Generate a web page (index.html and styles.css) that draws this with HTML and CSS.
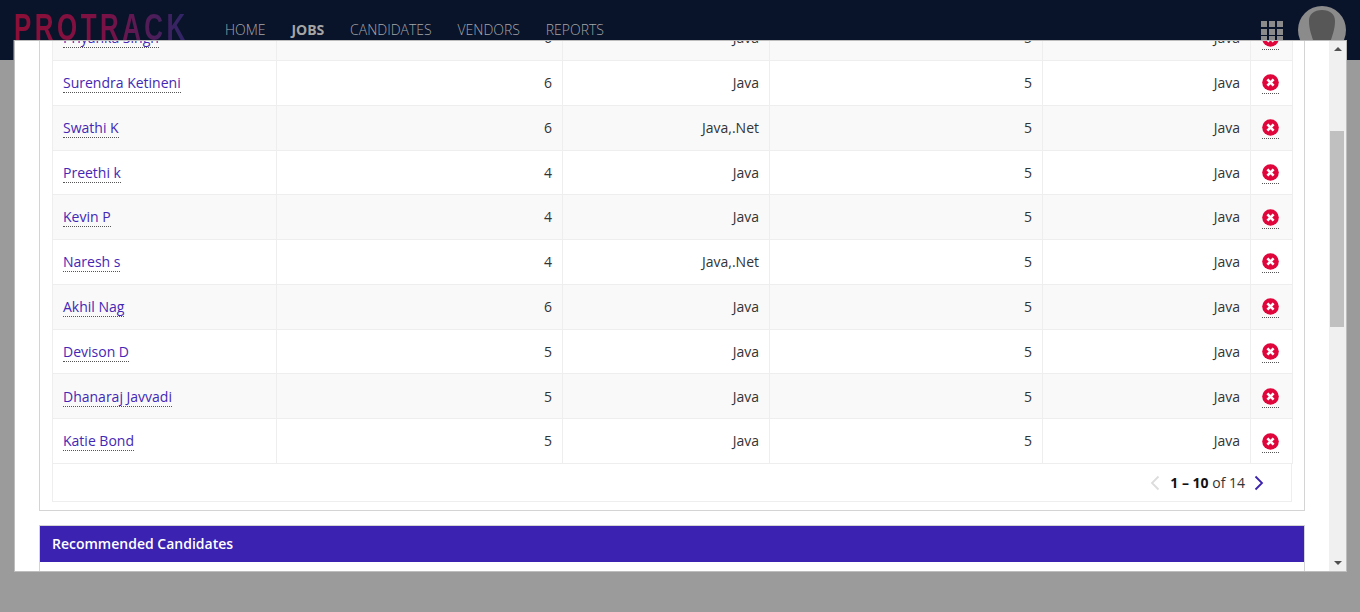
FILE: index.html
```html
<!DOCTYPE html>
<html lang="en">
<head>
    <meta charset="UTF-8">
    <meta name="viewport" content="width=device-width, initial-scale=1.0">
    <title>ProTrack Jobs</title>
    <link rel="stylesheet" href="styles.css">
</head>
<body>
    <header class="topbar">
        <div class="logo"><span>PROTRACK</span></div>
        <nav class="mainnav">
            <a href="#">HOME</a>
            <a href="#" class="active">JOBS</a>
            <a href="#">CANDIDATES</a>
            <a href="#">VENDORS</a>
            <a href="#">REPORTS</a>
        </nav>
        <div class="apps">
            <i></i><i></i><i></i><i></i><i></i><i></i><i></i><i></i><i></i>
        </div>
        <svg class="avatar" width="48" height="48" viewBox="0 0 48 48">
            <circle cx="24" cy="24" r="24" fill="#8b8b8b"/>
            <path d="M24 4c-8 0-13 4-13 11 0 9 3 15 5 22 1 5 3 9 8 9s7-4 8-9c2-7 5-13 5-22 0-7-5-11-13-11z" fill="#575757"/>
        </svg>
    </header>

    <div class="modal">
        <div class="modal-body">
            <section class="panel">
                <table class="grid">
                    <colgroup>
                        <col class="col-name">
                        <col class="col-exp">
                        <col class="col-skill">
                        <col class="col-exp2">
                        <col class="col-skill2">
                        <col class="col-del">
                    </colgroup>
                    <tbody>
                        <tr>
                            <td><a href="#" class="name">Priyanka Singh</a></td>
                            <td>6</td><td>Java</td><td>5</td><td>Java</td>
                            <td class="del"><a href="#"><svg width="17" height="17" viewBox="0 0 17 17"><circle cx="8.5" cy="8.5" r="8.3" fill="#e0063c"/><path d="M5.4 5.4l6.2 6.2M11.6 5.4l-6.2 6.2" stroke="#fff" stroke-width="2.6"/></svg></a></td>
                        </tr>
                        <tr>
                            <td><a href="#" class="name">Surendra Ketineni</a></td>
                            <td>6</td><td>Java</td><td>5</td><td>Java</td>
                            <td class="del"><a href="#"><svg width="17" height="17" viewBox="0 0 17 17"><circle cx="8.5" cy="8.5" r="8.3" fill="#e0063c"/><path d="M5.4 5.4l6.2 6.2M11.6 5.4l-6.2 6.2" stroke="#fff" stroke-width="2.6"/></svg></a></td>
                        </tr>
                        <tr>
                            <td><a href="#" class="name">Swathi K</a></td>
                            <td>6</td><td>Java,.Net</td><td>5</td><td>Java</td>
                            <td class="del"><a href="#"><svg width="17" height="17" viewBox="0 0 17 17"><circle cx="8.5" cy="8.5" r="8.3" fill="#e0063c"/><path d="M5.4 5.4l6.2 6.2M11.6 5.4l-6.2 6.2" stroke="#fff" stroke-width="2.6"/></svg></a></td>
                        </tr>
                        <tr>
                            <td><a href="#" class="name">Preethi k</a></td>
                            <td>4</td><td>Java</td><td>5</td><td>Java</td>
                            <td class="del"><a href="#"><svg width="17" height="17" viewBox="0 0 17 17"><circle cx="8.5" cy="8.5" r="8.3" fill="#e0063c"/><path d="M5.4 5.4l6.2 6.2M11.6 5.4l-6.2 6.2" stroke="#fff" stroke-width="2.6"/></svg></a></td>
                        </tr>
                        <tr>
                            <td><a href="#" class="name">Kevin P</a></td>
                            <td>4</td><td>Java</td><td>5</td><td>Java</td>
                            <td class="del"><a href="#"><svg width="17" height="17" viewBox="0 0 17 17"><circle cx="8.5" cy="8.5" r="8.3" fill="#e0063c"/><path d="M5.4 5.4l6.2 6.2M11.6 5.4l-6.2 6.2" stroke="#fff" stroke-width="2.6"/></svg></a></td>
                        </tr>
                        <tr>
                            <td><a href="#" class="name">Naresh s</a></td>
                            <td>4</td><td>Java,.Net</td><td>5</td><td>Java</td>
                            <td class="del"><a href="#"><svg width="17" height="17" viewBox="0 0 17 17"><circle cx="8.5" cy="8.5" r="8.3" fill="#e0063c"/><path d="M5.4 5.4l6.2 6.2M11.6 5.4l-6.2 6.2" stroke="#fff" stroke-width="2.6"/></svg></a></td>
                        </tr>
                        <tr>
                            <td><a href="#" class="name">Akhil Nag</a></td>
                            <td>6</td><td>Java</td><td>5</td><td>Java</td>
                            <td class="del"><a href="#"><svg width="17" height="17" viewBox="0 0 17 17"><circle cx="8.5" cy="8.5" r="8.3" fill="#e0063c"/><path d="M5.4 5.4l6.2 6.2M11.6 5.4l-6.2 6.2" stroke="#fff" stroke-width="2.6"/></svg></a></td>
                        </tr>
                        <tr>
                            <td><a href="#" class="name">Devison D</a></td>
                            <td>5</td><td>Java</td><td>5</td><td>Java</td>
                            <td class="del"><a href="#"><svg width="17" height="17" viewBox="0 0 17 17"><circle cx="8.5" cy="8.5" r="8.3" fill="#e0063c"/><path d="M5.4 5.4l6.2 6.2M11.6 5.4l-6.2 6.2" stroke="#fff" stroke-width="2.6"/></svg></a></td>
                        </tr>
                        <tr>
                            <td><a href="#" class="name">Dhanaraj Javvadi</a></td>
                            <td>5</td><td>Java</td><td>5</td><td>Java</td>
                            <td class="del"><a href="#"><svg width="17" height="17" viewBox="0 0 17 17"><circle cx="8.5" cy="8.5" r="8.3" fill="#e0063c"/><path d="M5.4 5.4l6.2 6.2M11.6 5.4l-6.2 6.2" stroke="#fff" stroke-width="2.6"/></svg></a></td>
                        </tr>
                        <tr>
                            <td><a href="#" class="name">Katie Bond</a></td>
                            <td>5</td><td>Java</td><td>5</td><td>Java</td>
                            <td class="del"><a href="#"><svg width="17" height="17" viewBox="0 0 17 17"><circle cx="8.5" cy="8.5" r="8.3" fill="#e0063c"/><path d="M5.4 5.4l6.2 6.2M11.6 5.4l-6.2 6.2" stroke="#fff" stroke-width="2.6"/></svg></a></td>
                        </tr>
                    </tbody>
                </table>
                <div class="pager">
                    <svg width="10" height="16" viewBox="0 0 10 16"><path d="M8.5 1.5L2 8l6.5 6.5" fill="none" stroke="#dcdcdc" stroke-width="1.8"/></svg>
                    <span class="pager-text"><b>1 – 10</b> of 14</span>
                    <svg class="pager-next" width="10" height="16" viewBox="0 0 10 16"><path d="M1.5 1.5L8 8l-6.5 6.5" fill="none" stroke="#3b22b0" stroke-width="1.8"/></svg>
                </div>
            </section>
            <section class="recommended">
                <h3>Recommended Candidates</h3>
            </section>
        </div>
        <div class="scrollbar">
            <span class="arrow-up"></span>
            <div class="track"><div class="thumb"></div></div>
            <span class="arrow-down"></span>
        </div>
    </div>
</body>
</html>
```
FILE: styles.css
```css
html, body {
    height: 100%;
}
body {
    margin: 0;
    overflow: hidden;
    background-color: #9b9b9b;
    font-family: "Open Sans", sans-serif;
    font-size: 14px;
    color: #333;
}
.topbar {
    display: flex;
    align-items: flex-start;
    height: 60px;
    padding-left: 14px;
    background-color: #09132a;
}
.logo {
    width: 171px;
    height: 40px;
    overflow: hidden;
}
.logo span {
    display: inline-block;
    margin-top: 8px;
    font-family: "Liberation Sans", sans-serif;
    font-weight: 700;
    font-size: 37px;
    line-height: 40px;
    letter-spacing: 5px;
    white-space: nowrap;
    background: linear-gradient(90deg, #8c0f36 0%, #7c1145 50%, #2b2768 100%);
    -webkit-background-clip: text;
    background-clip: text;
    color: transparent;
    transform: scaleX(0.7);
    transform-origin: left;
}
.mainnav {
    display: flex;
    gap: 25.8px;
    margin-left: 40px;
    padding-top: 20px;
}
.mainnav a {
    color: #a5a6a8;
    text-decoration: none;
    font-weight: 300;
    font-size: 14px;
    line-height: 20px;
}
.mainnav a.active {
    font-weight: 700;
    color: #a5a5a5;
}
.apps {
    display: grid;
    grid-template-columns: repeat(3, 6px);
    grid-auto-rows: 6px;
    gap: 1.5px 2px;
    margin-left: auto;
    margin-top: 21px;
}
.apps i {
    background-color: #8b8b8b;
}
.avatar {
    margin: 6px 14px 0 15px;
}

/* dialog sits over the dimmed page */
.modal {
    position: absolute;
    left: 14px;
    top: 40px;
    width: 1333px;
    height: 532px;
    box-sizing: border-box;
    display: flex;
    background-color: #fff;
    border: 1px solid #bdbdbd;
    box-shadow: -1px 0 0 rgba(155, 155, 155, 0.6);
}
.modal-body {
    flex: 1;
    overflow: hidden;
    padding: 0 24px;
}
.panel {
    margin-top: -25.9px;
    padding: 0 12px 8px;
    border: 1px solid #d4d4d4;
    border-top: 0;
}
.grid {
    width: 1240px;
    table-layout: fixed;
    border-collapse: collapse;
}
.col-name { width: 224px; }
.col-exp { width: 286px; }
.col-skill { width: 207px; }
.col-exp2 { width: 273px; }
.col-skill2 { width: 208px; }
.col-del { width: 42px; }
.grid td {
    height: 44.8px;
    padding: 0 10px 0.5px;
    line-height: 19px;
    border: 1px solid #eeeeee;
    box-sizing: border-box;
    text-align: right;
    vertical-align: middle;
}
.grid tr:nth-child(odd) {
    background-color: #f9f9f9;
}
.grid td:first-child {
    text-align: left;
}
.grid td.del {
    padding: 0 2px 0 0;
    text-align: center;
}
.grid a {
    color: #4427b5;
    text-decoration: none;
    border-bottom: 1px dotted #555;
}
.grid .del a {
    display: inline-block;
    height: 19px;
    margin-top: 3px;
    vertical-align: middle;
}
.grid .del svg {
    display: block;
}
.pager {
    display: flex;
    align-items: center;
    justify-content: flex-end;
    gap: 10px;
    height: 37px;
    padding-right: 27px;
    border: 1px solid #eeeeee;
    border-top: 0;
}
.pager-next {
    margin-left: -1px;
}
.pager-text b {
    color: #111;
}
.recommended {
    height: 60px;
    margin-top: 14px;
    border: 1px solid #d4d4d4;
    border-bottom: 0;
}
.recommended h3 {
    margin: 0;
    padding: 0 12px;
    height: 36px;
    line-height: 36px;
    font-size: 14px;
    font-weight: 600;
    color: #fff;
    background-color: #3b22b0;
}
.scrollbar {
    display: flex;
    flex-direction: column;
    align-items: center;
    width: 17px;
    background-color: #f0f0f0;
}
.track {
    flex: 1;
    width: 100%;
    padding-top: 74px;
    box-sizing: border-box;
}
.thumb {
    width: 14px;
    height: 196px;
    margin-left: 1px;
    background-color: #c0c0c0;
}
.arrow-up, .arrow-down {
    width: 0;
    height: 0;
    border-left: 4px solid transparent;
    border-right: 4px solid transparent;
    margin: 6px 0;
}
.arrow-up {
    border-bottom: 4px solid #505050;
}
.arrow-down {
    border-top: 4px solid #505050;
}
```
